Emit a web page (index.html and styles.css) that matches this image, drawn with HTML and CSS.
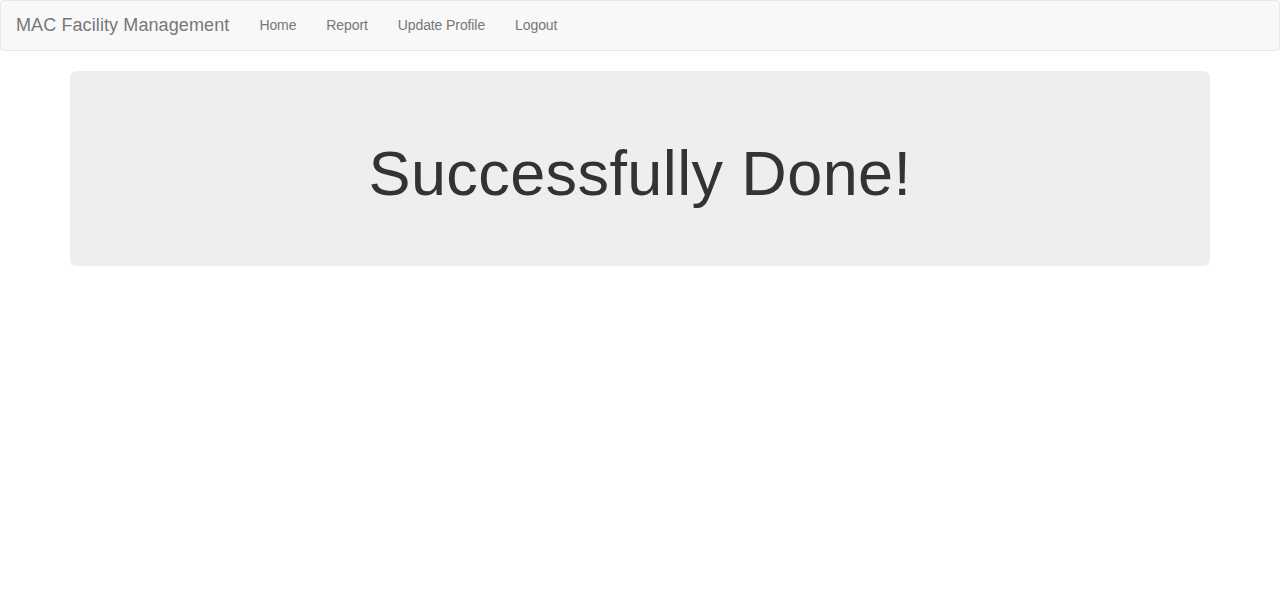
FILE: index.html
```html
<!DOCTYPE html>
<html>
<head>
<meta charset="utf-8">
<title>MAC Facility Management</title>
<link rel="stylesheet" href="styles.css">
</head>
<body>
<nav class="navbar">
  <a class="brand" href="#">MAC Facility Management</a>
  <ul class="nav">
    <li><a href="#">Home</a></li>
    <li><a href="#">Report</a></li>
    <li><a href="#">Update Profile</a></li>
    <li><a href="#">Logout</a></li>
  </ul>
</nav>
<div class="container">
  <div class="jumbotron">
    <h1>Successfully Done!</h1>
  </div>
</div>
</body>
</html>
```
FILE: styles.css
```css
* { box-sizing: border-box; }
html, body { margin: 0; padding: 0; }
body {
  font-family: "Liberation Sans", Arial, sans-serif;
  font-size: 14px;
  line-height: 1.42857;
  color: #333;
  background: #fff;
}
a { text-decoration: none; }
.navbar {
  display: flex;
  align-items: stretch;
  height: 51px;
  background: #f8f8f8;
  border: 1px solid #e7e7e7;
  border-radius: 4px;
  margin-bottom: 20px;
}
.brand {
  display: block;
  padding: 14px 15px 15px 15px;
  font-size: 18px;
  line-height: 20px;
  letter-spacing: 0.1px;
  color: #777;
}
.nav {
  display: flex;
  list-style: none;
  margin: 0;
  padding: 0;
}
.nav a {
  display: block;
  padding: 14px 15px 15px;
  line-height: 20px;
  letter-spacing: -0.1px;
  color: #777;
}
.container {
  width: 1170px;
  margin: 0 auto;
  padding: 0 15px;
}
.jumbotron {
  background: #eee;
  border-radius: 6px;
  padding: 48px 60px;
  margin-bottom: 30px;
  text-align: center;
}
.jumbotron h1 {
  margin: 20px 0 10px;
  font-size: 63px;
  font-weight: 500;
  line-height: 1.1;
  letter-spacing: 0.4px;
  color: #333;
}
```
